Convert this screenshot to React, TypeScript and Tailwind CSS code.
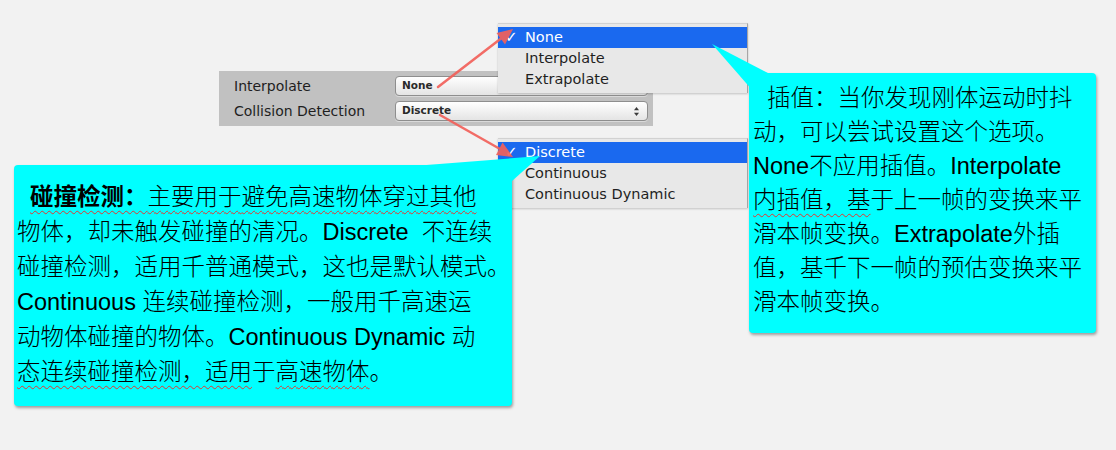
import { ReactNode } from "react";

const cjk = "font-['Liberation_Sans','Noto_Sans_CJK_SC',sans-serif]";
const mac = "font-['DejaVu_Sans',sans-serif]";

// spell-check style wavy underline seen in the screenshot
const Wavy = ({ children }: { children: ReactNode }) => (
  <span className="underline decoration-wavy decoration-[#e8342c] decoration-1 underline-offset-[5px]">{children}</span>
);

const UpDown = () => (
  <svg width="7" height="11" viewBox="0 0 7 11" className="shrink-0">
    <path d="M3.5 1 L6 4.2 H1 Z" fill="#3a3a3a" />
    <path d="M3.5 10 L6 6.8 H1 Z" fill="#3a3a3a" />
  </svg>
);

const PopupField = ({ value }: { value: string }) => (
  <div className="flex h-[20px] w-[253px] items-center justify-between rounded-[4px] border border-[#8e8e8e] bg-gradient-to-b from-[#ffffff] to-[#e4e4e4] pl-[6px] pr-[7px] shadow-[0_1px_0_rgba(255,255,255,0.4)]">
    <span className="text-[10.5px] font-bold text-[#2a2a2a]">{value}</span>
    <UpDown />
  </div>
);

interface MenuProps {
  items: string[];
  top: string;
}

const Menu = ({ items, top }: MenuProps) => (
  <div className={`absolute left-[498px] ${top} w-[250px] border-t border-r border-[#a6a6a6] border-t-[#d2d2d2] bg-[#e8e8e8] pt-[3px] pb-[3px] shadow-[0_1px_2px_rgba(0,0,0,0.2)] ${mac}`}>
    {items.map((item, i) => (
      <div
        key={item}
        className={`flex h-[21px] items-center text-[14.5px] ${i === 0 ? "bg-[#1a69ef] text-white" : "text-[#1f1f1f]"}`}
      >
        <span className="w-[27px] pl-[7px] text-[15px] font-bold">{i === 0 ? "✓" : ""}</span>
        {item}
      </div>
    ))}
  </div>
);

const Inspector = () => (
  <div className={`ml-[219px] flex w-[434px] flex-col gap-[5px] bg-[#c1c1c1] py-[5px] pl-[15px] pr-[5px] text-[14px] text-[#1e1e1e] ${mac}`}>
    <div className="flex h-[20px] items-center">
      <span className="w-[161px]">Interpolate</span>
      <PopupField value="None" />
    </div>
    <div className="flex h-[20px] items-center">
      <span className="w-[161px]">Collision Detection</span>
      <PopupField value="Discrete" />
    </div>
  </div>
);

const Overlay = () => (
  <svg className="pointer-events-none absolute inset-0" width="1116" height="450">
    {/* callout pointers */}
    <polygon points="420,165.5 540,156 512,181" fill="#00ffff" />
    <polygon points="712,44 769,73.5 749.5,87" fill="#00ffff" />
    {/* red arrows */}
    <g stroke="#f2615b" strokeWidth="2.5" strokeLinecap="round" fill="#f2615b" opacity="0.92">
      <line x1="438" y1="87" x2="501" y2="38.5" />
      <polygon points="513,29 505,44.5 496.5,33" stroke="none" />
      <line x1="440" y1="115" x2="500" y2="149" />
      <polygon points="513,157 496,155 502.5,142.5" stroke="none" />
    </g>
  </svg>
);

export default function App() {
  return (
    <div className={`relative h-[450px] w-[1116px] overflow-hidden bg-[#f2f2f2] pt-[71px] ${cjk}`}>
      <Inspector />

      <Menu top="top-[23px]" items={["None", "Interpolate", "Extrapolate"]} />
      <Menu top="top-[138px]" items={["Discrete", "Continuous", "Continuous Dynamic"]} />

      {/* collision detection callout */}
      <div className="absolute left-[14px] top-[165px] h-[241px] w-[498px] rounded-[4px] bg-[#00ffff] pl-[3px] pt-[15px] text-[23.5px] font-light leading-[35px] text-black shadow-[1px_2px_3px_rgba(0,0,0,0.35)]">
        <div className="whitespace-nowrap pl-[13px]">
          <Wavy><b className="font-bold">碰撞检测：</b>主要用于</Wavy><Wavy>避免高速物体穿过其他</Wavy>
        </div>
        <div className="whitespace-nowrap">物体，却未触发碰撞的清况。Discrete&nbsp; 不连续</div>
        <div className="whitespace-nowrap">碰撞检测，适用千普通模式，这也是默认模式。</div>
        <div className="whitespace-nowrap">Continuous 连续碰撞检测，一般用千高速运</div>
        <div className="whitespace-nowrap">动物体碰撞的物体。Continuous Dynamic 动</div>
        <div className="whitespace-nowrap">
          <Wavy>态连续碰撞检测，适用</Wavy>于<Wavy>高速物体</Wavy>。
        </div>
      </div>

      {/* interpolate callout */}
      <div className="absolute left-[749px] top-[73px] h-[260px] w-[347px] rounded-[4px] bg-[#00ffff] pl-[4px] pt-[8px] text-[23.5px] font-light leading-[34px] text-black shadow-[1px_2px_3px_rgba(0,0,0,0.35)]">
        <div className="whitespace-nowrap pl-[14px]">插值：当你发现刚体运动时抖</div>
        <div className="whitespace-nowrap">动，可以尝试设置这个选项。</div>
        <div className="whitespace-nowrap">None不应用插值。Interpolate</div>
        <div className="whitespace-nowrap">
          <Wavy>内插值，基</Wavy>于上一帧的变换来平
        </div>
        <div className="whitespace-nowrap">滑本帧变换。Extrapolate外插</div>
        <div className="whitespace-nowrap">值，基千下一帧的预估变换来平</div>
        <div className="whitespace-nowrap">滑本帧变换。</div>
      </div>

      <Overlay />
    </div>
  );
}
